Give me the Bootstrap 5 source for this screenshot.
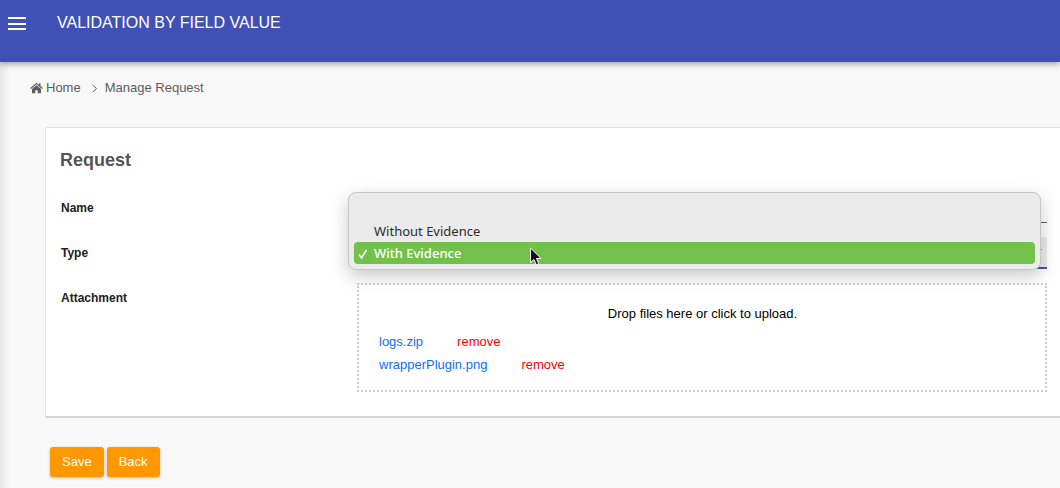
<!DOCTYPE html>
<html lang="en">
<head>
<meta charset="utf-8">
<title>Validation by field value</title>
<link rel="stylesheet" href="https://cdn.jsdelivr.net/npm/bootstrap@5.3.0/dist/css/bootstrap.min.css">
<style>
html,body{height:100%;overflow:hidden}
body{width:1060px;height:488px;background:#f8f8f8;font-family:"Liberation Sans",Arial,sans-serif;color:#212529;position:relative}
.app-bar{height:62px;background:#3f51b5;box-shadow:0 2px 6px rgba(0,0,0,.35);position:relative;z-index:2;padding:14px 0 0 8px;align-items:flex-start}
.burger{width:18px;height:13px;margin-top:3px;border-top:2px solid #fff;border-bottom:2px solid #fff;position:relative}
.burger::after{content:"";position:absolute;left:0;right:0;top:3.5px;height:2px;background:#fff}
.app-title{color:#fff;font-size:16px;line-height:18px;margin-left:31px}
.edge{position:absolute;left:0;top:62px;bottom:0;width:10px;background:linear-gradient(90deg,#e6e6e6,#f8f8f8)}
.content{padding:18px 0 0 30px;position:relative}
.crumbs{font-size:13px;line-height:16px;color:#5c5c5c;height:16px;align-items:center}
.crumbs svg{width:13px;height:12px;margin-right:3px;fill:#5c5c5c}
.crumb-sep{margin:0 7px 0 10px;display:flex}
.crumb-sep svg{width:7px;height:9px;margin:0;fill:none;stroke:#5c5c5c;stroke-width:1}
.req-card{margin:31px 0 0 15px;width:1100px;height:291px;background:#fff;border:1px solid #e0e0e0;border-bottom-width:2px;border-bottom-color:#d6d6d6;border-radius:2px;padding:0 14px;flex-shrink:0}
.req-title{font-size:18px;font-weight:700;color:#555;line-height:22px;margin:21px 0 0 0}
.field-row{height:45px;display:flex}
.field-label{width:297px;padding-left:1px;font-size:12px;font-weight:700;color:#212121;line-height:14px;margin-top:7px;flex-shrink:0}
.fake-input{width:690px;height:30px;border-bottom:1px solid #666;margin-top:-1px}
.fake-select{width:690px;height:32px;margin-top:-2px;background:#eee;border-bottom:2px solid #3f51b5;position:relative}
.fake-select::after{content:"";position:absolute;right:5px;top:12px;border:3px solid transparent;border-top-color:#222}
.fields{margin-top:23px}
.drop{width:690px;height:109px;border:2px dotted #ccc;margin-top:-1px;font-size:13px;padding:0 20px}
.drop-msg{text-align:center;color:#000;margin-top:21px;line-height:16px;font-size:13px;padding-left:1px}
.file-row{height:23px;line-height:16px;font-size:13px}
.file-name{color:#0d6efd;text-decoration:none}
.file-remove{color:#ff0000;text-decoration:none;margin-left:34px}
.files{margin-top:12px}
.acts{margin:29px 0 0 20px;gap:3px}
.btn-amber{background:#ff9800;color:#fff;font-size:13px;border:0;border-radius:3px;height:30px;padding:0 12px;box-shadow:0 1px 3px rgba(0,0,0,.25);font-family:"Liberation Sans",Arial,sans-serif}
.btn-amber:hover{background:#ff9800;color:#fff}
.pop{position:absolute;left:348px;top:192px;width:693px;height:78px;background:#ebebeb;border:1px solid #c6c6c6;border-radius:8px;box-shadow:0 6px 18px rgba(0,0,0,.22);z-index:5;font-family:"Noto Sans","Liberation Sans",sans-serif;font-size:13px;color:#2b2b2b;padding-top:27px}
.pop-item{height:22px;line-height:22px;margin:0 5px;padding-left:20px;border-radius:4px;position:relative}
.pop-item.sel{background:#72c14a;color:#fff;font-weight:500}
.chk{position:absolute;left:4px;top:7px;width:10px;height:10px;fill:none;stroke:#fff;stroke-width:1.5}
.pointer{position:absolute;left:529px;top:247px;width:14px;height:20px;z-index:6}
</style>
</head>
<body>
<header class="app-bar d-flex">
  <div class="burger"></div>
  <div class="app-title">VALIDATION BY FIELD VALUE</div>
</header>
<div class="edge"></div>
<main class="content">
  <nav class="crumbs d-flex" aria-label="breadcrumb">
    <svg viewBox="0 0 26 22"><path d="M13 0.5 .5 11l1.6 1.9L13 3.7l10.9 9.2 1.6-1.9-4.5-3.8V1.5h-3v3.3zM13 5.6 4 13.2V21.5h6.5v-6h5v6H22v-8.3z"/></svg>
    <span>Home</span>
    <span class="crumb-sep"><svg viewBox="0 0 7 9"><path d="M1.5.8 5.5 4.5 1.5 8.2"/></svg></span>
    <span>Manage Request</span>
  </nav>
  <section class="req-card">
    <h1 class="req-title">Request</h1>
    <div class="fields">
      <div class="field-row"><div class="field-label">Name</div><div class="fake-input"></div></div>
      <div class="field-row"><div class="field-label">Type</div><div class="fake-select"></div></div>
      <div class="field-row"><div class="field-label">Attachment</div>
        <div class="drop">
          <div class="drop-msg">Drop files here or click to upload.</div>
          <div class="files">
            <div class="file-row"><a class="file-name" href="#">logs.zip</a><a class="file-remove" href="#">remove</a></div>
            <div class="file-row"><a class="file-name" href="#">wrapperPlugin.png</a><a class="file-remove" href="#">remove</a></div>
          </div>
        </div>
      </div>
    </div>
  </section>
  <div class="acts d-flex">
    <button class="btn btn-amber" type="button">Save</button>
    <button class="btn btn-amber" type="button">Back</button>
  </div>
</main>
<div class="pop">
  <div class="pop-item">Without Evidence</div>
  <div class="pop-item sel"><svg class="chk" viewBox="0 0 10 10"><path d="M1 5.5 3.5 9 8.5 1"/></svg>With Evidence</div>
</div>
<svg class="pointer" viewBox="0 0 14 20"><path d="M1.5 1v14.5l3.4-3 2.3 5.3 2.6-1.1-2.3-5.2h4.6z" fill="#111" stroke="#fff" stroke-width="1"/></svg>
</body>
</html>
